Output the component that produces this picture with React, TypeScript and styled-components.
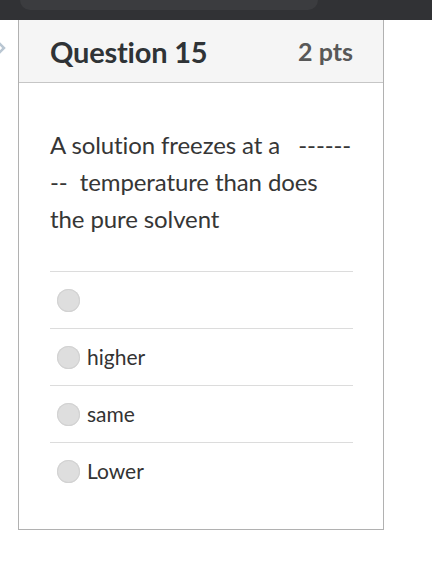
import React from 'react'
import styled, { createGlobalStyle } from 'styled-components'

const GlobalStyle = createGlobalStyle`
    html, body {
        margin: 0;
        padding: 0;
        background: #ffffff;
    }
    body {
        font-family: 'Lato', 'Open Sans', sans-serif;
        color: #333333;
    }
`

const TopBar = styled.div`
    height: 20px;
    background: #313235;
    display: flex;
    align-items: flex-start;
`

const AddressPill = styled.div`
    margin-left: 20px;
    width: 298px;
    height: 10px;
    background: #3b3c3f;
    border-radius: 0 0 12px 12px;
`

const Page = styled.div`
    display: flex;
    align-items: flex-start;
`

const Gutter = styled.div`
    width: 18px;
    padding-top: 20px;
    display: flex;
`

const Card = styled.div`
    width: 364px;
    border: 1px solid #b1b1b1;
    border-top: none;
    background: #ffffff;
`

const Header = styled.div`
    height: 62px;
    background: #f5f5f5;
    border-bottom: 1px solid #c6c6c6;
    display: flex;
    align-items: center;
    justify-content: space-between;
    padding: 0 30px 0 31px;
`

const Title = styled.h2`
    margin: 0;
    font-family: 'Lato', sans-serif;
    font-size: 29px;
    font-weight: 700;
    color: #2f3336;
    letter-spacing: -0.2px;
`

const Points = styled.span`
    font-family: 'Lato', sans-serif;
    font-size: 25px;
    font-weight: 700;
    color: #585858;
`

const Body = styled.div`
    padding: 43px 30px 30px 31px;
`

const QuestionText = styled.p`
    margin: 0 0 34px;
    font-family: 'Lato', sans-serif;
    font-size: 24px;
    line-height: 37px;
    color: #363636;
    white-space: nowrap;
    letter-spacing: -0.1px;
`

const Options = styled.div`
    display: flex;
    flex-direction: column;
`

const Option = styled.label`
    height: 56px;
    border-top: 1px solid #dcdcdc;
    display: flex;
    align-items: center;
    gap: 7px;
    padding-left: 7px;
`

const Radio = styled.span`
    width: 23px;
    height: 23px;
    border-radius: 50%;
    background: #dedede;
    box-shadow: inset 0 0 0 1px #d2d2d2;
    flex-shrink: 0;
`

const OptionLabel = styled.span`
    font-family: 'Lato', sans-serif;
    font-size: 21px;
    color: #333333;
    margin-top: -1px;
`

const options = ['', 'higher', 'same', 'Lower']

const App: React.FC = () => {
    return (
        <>
            <GlobalStyle />
            <TopBar>
                <AddressPill />
            </TopBar>
            <Page>
                <Gutter>
                    <svg width="8" height="16" viewBox="0 0 8 16">
                        <path d="M-2 2 L4 8 L-2 14" fill="none" stroke="#b9c6d2" strokeWidth="2.5" />
                    </svg>
                </Gutter>
                <Card>
                    <Header>
                        <Title>Question 15</Title>
                        <Points>2 pts</Points>
                    </Header>
                    <Body>
                        <QuestionText>
                            A solution freezes at a&nbsp;&nbsp; ------
                            <br />
                            --&nbsp; temperature than does
                            <br />
                            the pure solvent
                        </QuestionText>
                        <Options>
                            {options.map((o, i) => (
                                <Option key={i}>
                                    <Radio />
                                    <OptionLabel>{o}</OptionLabel>
                                </Option>
                            ))}
                        </Options>
                    </Body>
                </Card>
            </Page>
        </>
    )
}

export default App
